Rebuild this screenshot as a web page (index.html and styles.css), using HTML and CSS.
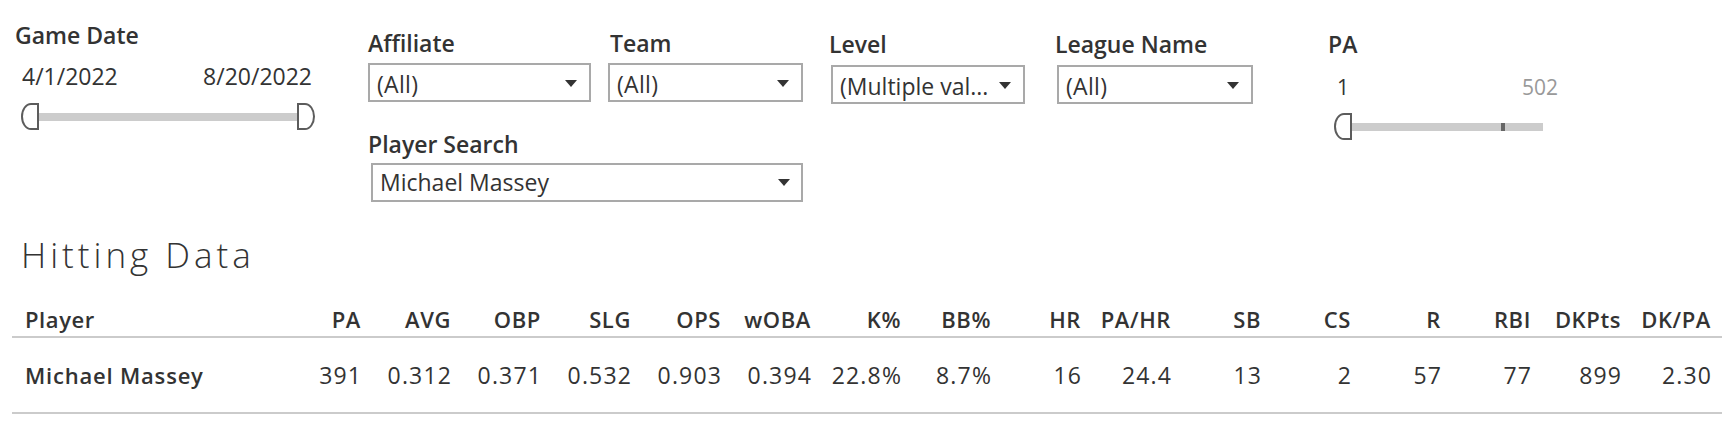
FILE: index.html
```html
<!DOCTYPE html>
<html lang="en">
<head>
<meta charset="utf-8">
<title>Hitting Data</title>
<link rel="stylesheet" href="styles.css">
</head>
<body>
<div class="dash">
  <div class="top">
    <div class="f-date">
      <div class="label">Game Date</div>
      <div class="range"><span>4/1/2022</span><span>8/20/2022</span></div>
      <div class="slider date-slider">
        <span class="handle hl"></span><span class="track"></span><span class="handle hr"></span>
      </div>
    </div>

    <div class="g1">
      <div class="row">
        <div class="filter affiliate">
          <div class="label">Affiliate</div>
          <div class="dd w-aff"><span class="dd-text">(All)</span><svg class="arrow" width="12" height="7" viewBox="0 0 12 7"><path d="M0 0H12L6 7Z"/></svg></div>
        </div>
        <div class="filter team">
          <div class="label">Team</div>
          <div class="dd w-team"><span class="dd-text">(All)</span><svg class="arrow" width="12" height="7" viewBox="0 0 12 7"><path d="M0 0H12L6 7Z"/></svg></div>
        </div>
      </div>
      <div class="filter search">
        <div class="label">Player Search</div>
        <div class="dd w-search"><span class="dd-text">Michael Massey</span><svg class="arrow" width="12" height="7" viewBox="0 0 12 7"><path d="M0 0H12L6 7Z"/></svg></div>
      </div>
    </div>

    <div class="g2">
      <div class="filter level">
        <div class="label">Level</div>
        <div class="dd w-level"><span class="dd-text">(Multiple val...</span><svg class="arrow" width="12" height="7" viewBox="0 0 12 7"><path d="M0 0H12L6 7Z"/></svg></div>
      </div>
      <div class="filter league">
        <div class="label">League Name</div>
        <div class="dd w-league"><span class="dd-text">(All)</span><svg class="arrow" width="12" height="7" viewBox="0 0 12 7"><path d="M0 0H12L6 7Z"/></svg></div>
      </div>
    </div>

    <div class="f-pa">
      <div class="label">PA</div>
      <div class="pa-range"><span>1</span><span class="muted">502</span></div>
      <div class="slider pa-slider">
        <span class="handle hl"></span><span class="track"><span class="tick"></span></span>
      </div>
    </div>
  </div>

  <h1 class="title">Hitting Data</h1>

  <div class="table">
    <div class="tr th">
      <div class="c name">Player</div>
      <div class="c">PA</div>
      <div class="c">AVG</div>
      <div class="c">OBP</div>
      <div class="c">SLG</div>
      <div class="c">OPS</div>
      <div class="c">wOBA</div>
      <div class="c">K%</div>
      <div class="c">BB%</div>
      <div class="c">HR</div>
      <div class="c">PA/HR</div>
      <div class="c">SB</div>
      <div class="c">CS</div>
      <div class="c">R</div>
      <div class="c">RBI</div>
      <div class="c">DKPts</div>
      <div class="c">DK/PA</div>
    </div>
    <div class="tr td">
      <div class="c name">Michael Massey</div>
      <div class="c">391</div>
      <div class="c">0.312</div>
      <div class="c">0.371</div>
      <div class="c">0.532</div>
      <div class="c">0.903</div>
      <div class="c">0.394</div>
      <div class="c">22.8%</div>
      <div class="c">8.7%</div>
      <div class="c">16</div>
      <div class="c">24.4</div>
      <div class="c">13</div>
      <div class="c">2</div>
      <div class="c">57</div>
      <div class="c">77</div>
      <div class="c">899</div>
      <div class="c">2.30</div>
    </div>
  </div>
</div>
</body>
</html>
```

FILE: styles.css
```css
html, body {
  margin: 0;
  padding: 0;
  background: #fff;
}

body {
  font-family: "Open Sans", "Noto Sans", "Liberation Sans", sans-serif;
  color: #333;
}

.dash {
  width: 1730px;
  height: 444px;
  overflow: hidden;
}

/* ---------- filter bar ---------- */
.top {
  display: flex;
  align-items: flex-start;
}

.label {
  font-size: 23px;
  line-height: 28px;
  font-weight: 600;
  color: #333;
  white-space: nowrap;
}

/* Game Date */
.f-date {
  margin-left: 15px;
  padding-top: 21px;
  width: 300px;
}

.range {
  display: flex;
  justify-content: space-between;
  font-size: 23px;
  line-height: 28px;
  margin-top: 13px;
  padding: 0 3px 0 7px;
}

.slider {
  display: flex;
  align-items: center;
}

.date-slider {
  margin-top: 13px;
  margin-left: 6px;
  width: 294px;
}

.handle {
  flex: none;
  display: block;
  width: 18px;
  height: 27px;
  box-sizing: border-box;
  border: 2px solid #5c5c5c;
  background: #fff;
}

.handle.hl {
  border-radius: 10px 0 0 10px / 13.5px 0 0 13.5px;
}

.handle.hr {
  border-radius: 0 10px 10px 0 / 0 13.5px 13.5px 0;
}

.track {
  flex: 1;
  display: block;
  height: 8px;
  background: #cccccc;
  position: relative;
}

/* dropdown groups */
.g1 {
  margin-left: 53px;
  padding-top: 29px;
}

.row {
  display: flex;
  align-items: flex-start;
}

.team {
  margin-left: 17px;
}

.team .label {
  padding-left: 2px;
}

.dd {
  display: flex;
  align-items: flex-start;
  justify-content: space-between;
  box-sizing: border-box;
  height: 39px;
  margin-top: 6px;
  border: 2px solid #a9a9a9;
  background: #fff;
  padding: 5px 12px 0 7px;
  font-size: 23px;
  line-height: 28px;
  letter-spacing: 0.3px;
  color: #333;
  white-space: nowrap;
}

.dd .arrow {
  flex: none;
  align-self: center;
  margin-top: -3px;
  fill: #333;
}

.w-aff { width: 223px; }
.w-team { width: 195px; }

.search {
  margin-top: 28px;
}

.w-search {
  width: 432px;
  margin-left: 3px;
  margin-top: 5px;
  padding-top: 3px;
  padding-left: 7px;
  padding-right: 11px;
  letter-spacing: 0;
}

.g2 {
  display: flex;
  align-items: flex-start;
  margin-left: 26px;
  padding-top: 30px;
}

.w-level {
  width: 194px;
  margin-left: 2px;
  margin-top: 7px;
  padding-right: 12px;
  letter-spacing: 0;
}

.league {
  margin-left: 30px;
}

.w-league {
  width: 196px;
  margin-left: 2px;
  margin-top: 7px;
}

/* PA */
.f-pa {
  margin-left: 75px;
  padding-top: 30px;
  width: 230px;
}

.pa-range {
  display: flex;
  justify-content: space-between;
  font-size: 21px;
  line-height: 26px;
  margin-top: 16px;
  padding-left: 9px;
}

.muted {
  color: #999;
}

.pa-slider {
  margin-top: 13px;
  margin-left: 6px;
  width: 209px;
}

.tick {
  position: absolute;
  left: 149px;
  top: 0;
  width: 4px;
  height: 8px;
  background: #666;
}

/* ---------- title ---------- */
.title {
  margin: 33px 0 0 21px;
  font-size: 35px;
  line-height: 40px;
  font-weight: 350;
  letter-spacing: 4px;
  color: #333;
}

/* ---------- table ---------- */
.table {
  margin: 24px 0 0 12px;
  width: 1710px;
}

.tr {
  display: grid;
  grid-template-columns: 259px repeat(16, 90px) 11px;
  border-bottom: 2px solid #cbcbcb;
  font-size: 22px;
  letter-spacing: 0.6px;
  color: #333;
  white-space: nowrap;
}

.th {
  height: 39px;
  box-sizing: border-box;
  padding-top: 1px;
  line-height: 38px;
  font-weight: 600;
}

.td {
  height: 74px;
  line-height: 74px;
  font-size: 23px;
  letter-spacing: 1.2px;
}

.c {
  text-align: right;
}

.td .c {
  margin-right: -1.2px;
}

.c.name {
  text-align: left;
  padding-left: 13px;
}

.td .name {
  font-weight: 600;
  font-size: 22px;
  letter-spacing: 0.8px;
  margin-right: 0;
}
```
